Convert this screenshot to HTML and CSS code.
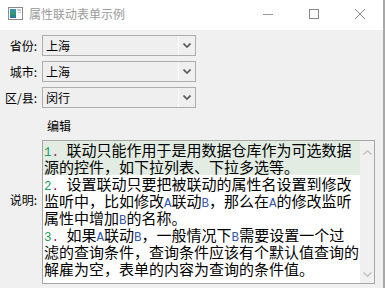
FILE: index.html
```html
<!DOCTYPE html>
<html lang="zh-CN">
<head>
    <meta charset="UTF-8">
    <meta name="viewport" content="width=device-width, initial-scale=1.0">
    <title>属性联动表单示例</title>
    <link rel="stylesheet" href="styles.css">
</head>
<body>
    <div class="window">
        <div class="titlebar">
            <svg class="app-icon" width="15" height="13" viewBox="0 0 15 13">
                <defs>
                    <linearGradient id="ig" x1="0" y1="0" x2="0" y2="1">
                        <stop offset="0" stop-color="#3a8fc8"/>
                        <stop offset="0.5" stop-color="#2f9a6a"/>
                        <stop offset="1" stop-color="#2a6fb0"/>
                    </linearGradient>
                </defs>
                <rect x="0.5" y="0.5" width="14" height="12" fill="#fff" stroke="#8a8a8a"/>
                <rect x="2" y="2" width="6" height="9" fill="url(#ig)"/>
                <rect x="9" y="2" width="4" height="2" fill="#c8c8c8"/>
                <rect x="10" y="5" width="3" height="1" fill="#c8c8c8"/>
            </svg>
            <span class="title">属性联动表单示例</span>
            <div class="controls">
                <span class="ctl">
                    <svg width="10" height="10" viewBox="0 0 10 10"><path d="M0 5.5 H10" stroke="#999" stroke-width="1"/></svg>
                </span>
                <span class="ctl">
                    <svg width="10" height="10" viewBox="0 0 10 10"><rect x="0.5" y="0.5" width="9" height="9" fill="none" stroke="#888"/></svg>
                </span>
                <span class="ctl">
                    <svg width="10" height="10" viewBox="0 0 10 10"><path d="M0 0 L10 10 M10 0 L0 10" stroke="#888" stroke-width="1"/></svg>
                </span>
            </div>
        </div>

        <div class="content">
            <div class="form">
                <span class="lbl">省份:</span>
                <div class="combo">
                    <span class="combo-text">上海</span>
                    <span class="combo-btn"><svg width="8" height="5" viewBox="0 0 8 5"><path d="M0.5 0.5 L4 4 L7.5 0.5" fill="none" stroke="#555" stroke-width="1.6"/></svg></span>
                </div>

                <span class="lbl">城市:</span>
                <div class="combo">
                    <span class="combo-text">上海</span>
                    <span class="combo-btn"><svg width="8" height="5" viewBox="0 0 8 5"><path d="M0.5 0.5 L4 4 L7.5 0.5" fill="none" stroke="#555" stroke-width="1.6"/></svg></span>
                </div>

                <span class="lbl">区/县:</span>
                <div class="combo">
                    <span class="combo-text">闵行</span>
                    <span class="combo-btn"><svg width="8" height="5" viewBox="0 0 8 5"><path d="M0.5 0.5 L4 4 L7.5 0.5" fill="none" stroke="#555" stroke-width="1.6"/></svg></span>
                </div>

                <span></span>
                <span class="caption">编辑</span>

                <span class="lbl lbl-top">说明:</span>
                <div class="memo">
                    <div class="memo-text">
                        <div class="para current">
                            <div class="line"><span class="num">1</span><span class="dot">. </span>联动只能作用于是用数据仓库作为可选数据</div>
                            <div class="line">源的控件，如下拉列表、下拉多选等。</div>
                        </div>
                        <div class="para">
                            <div class="line"><span class="num">2</span><span class="dot">. </span>设置联动只要把被联动的属性名设置到修改</div>
                            <div class="line">监听中，比如修改<span class="ab">A</span>联动<span class="ab">B</span>，那么在<span class="ab">A</span>的修改监听</div>
                            <div class="line">属性中增加<span class="ab">B</span>的名称。</div>
                        </div>
                        <div class="para">
                            <div class="line"><span class="num">3</span><span class="dot">. </span>如果<span class="ab">A</span>联动<span class="ab">B</span>，一般情况下<span class="ab">B</span>需要设置一个过</div>
                            <div class="line">滤的查询条件，查询条件应该有个默认值查询的</div>
                            <div class="line">解雇为空，表单的内容为查询的条件值。</div>
                        </div>
                    </div>
                    <div class="scrollbar">
                        <svg width="9" height="5" viewBox="0 0 9 5"><path d="M0.5 4.5 L4.5 0.8 L8.5 4.5" fill="none" stroke="#c2c2c2" stroke-width="1.5"/></svg>
                        <svg width="9" height="5" viewBox="0 0 9 5"><path d="M0.5 0.5 L4.5 4.2 L8.5 0.5" fill="none" stroke="#c2c2c2" stroke-width="1.5"/></svg>
                    </div>
                </div>
            </div>
        </div>
    </div>
</body>
</html>
```

FILE: styles.css
```css
body, html {
    margin: 0;
    padding: 0;
    height: 100%;
    font-family: "Noto Sans CJK SC", "Noto Sans", sans-serif;
    font-size: 12px;
    color: #000;
}
.window {
    height: 100%;
    box-sizing: border-box;
    border-right: 2px solid #a8a8a8;
    background-color: #f0f0f0;
    display: flex;
    flex-direction: column;
}
.titlebar {
    height: 30px;
    flex-shrink: 0;
    background-color: #fff;
    display: flex;
    align-items: center;
}
.app-icon {
    margin-left: 8px;
    margin-top: -3px;
}
.title {
    margin-left: 6px;
    color: #9a9a9a;
    line-height: 16px;
    margin-top: -2px;
}
.controls {
    margin-left: auto;
    display: flex;
    height: 100%;
}
.ctl {
    width: 46px;
    display: flex;
    align-items: center;
    justify-content: center;
    padding-bottom: 2px;
    box-sizing: border-box;
}
.content {
    flex-grow: 1;
    padding-top: 5px;
}
.form {
    display: grid;
    grid-template-columns: 37px auto;
    column-gap: 5px;
    row-gap: 5px;
    justify-content: start;
}
.lbl {
    text-align: right;
    align-self: center;
    line-height: 17px;
    white-space: nowrap;
}
.lbl-top {
    align-self: start;
    padding-top: 51px;
}
.combo {
    width: 154px;
    height: 21px;
    box-sizing: border-box;
    border: 1px solid #adadad;
    background-color: #efefef;
    display: flex;
    align-items: center;
}
.combo-text {
    flex-grow: 1;
    padding-left: 3px;
    line-height: 17px;
}
.combo-btn {
    width: 16px;
    height: 100%;
    border-left: 1px solid #fbfbfb;
    display: flex;
    align-items: center;
    justify-content: center;
}
.caption {
    margin-top: 4px;
    margin-bottom: 1px;
    padding-left: 5px;
    line-height: 17px;
}
.memo {
    width: 333px;
    height: 144px;
    box-sizing: border-box;
    border: 1px solid #a6a6a6;
    background-color: #fff;
    display: flex;
}
.memo-text {
    flex-grow: 1;
    padding-top: 0;
    font-size: 15px;
    line-height: 17px;
    overflow: hidden;
}
.line {
    height: 17px;
    padding-left: 1px;
    white-space: nowrap;
}
.para.current {
    background-color: #e2ece2;
}
.num, .dot, .ab {
    font-family: "Liberation Mono", monospace;
    font-size: 12.5px;
    line-height: 1;
    white-space: pre;
}
.num {
    color: #16a05a;
}
.dot {
    color: #8c2060;
}
.ab {
    color: #3558b0;
}
.scrollbar {
    width: 14px;
    flex-shrink: 0;
    background-color: #f0f0f0;
    display: flex;
    flex-direction: column;
    justify-content: space-between;
    align-items: center;
    padding: 9px 0 6px;
    box-sizing: border-box;
}
```
